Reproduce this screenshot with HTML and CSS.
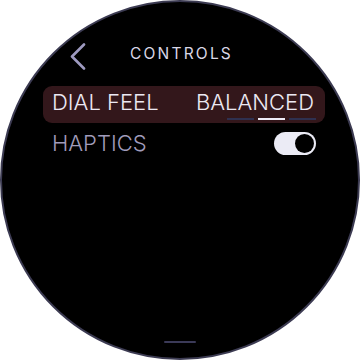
FILE: index.html
```html
<!DOCTYPE html>
<html lang="en">
<head>
  <meta charset="UTF-8">
  <meta name="viewport" content="width=device-width, initial-scale=1.0">
  <title>Controls</title>
  <link rel="stylesheet" href="styles.css">
</head>
<body>

  <div class="watch">

    <!-- Header with back button -->
    <div class="header">
      <svg class="back" width="16" height="27" viewBox="0 0 16 27">
        <polyline points="14,1.5 2,13.5 14,25.5" fill="none" stroke="#9e9ac0" stroke-width="2.6" stroke-linecap="round" stroke-linejoin="round"/>
      </svg>
      <span class="title">CONTROLS</span>
    </div>

    <!-- Settings list -->
    <div class="list">
      <div class="row selected">
        <span class="label">DIAL FEEL</span>
        <div class="value">
          <span class="value-text">BALANCED</span>
          <div class="steps">
            <span class="step"></span>
            <span class="step active"></span>
            <span class="step"></span>
          </div>
        </div>
      </div>

      <div class="row toggle-row">
        <span class="label muted">HAPTICS</span>
        <span class="toggle"><span class="knob"></span></span>
      </div>
    </div>

    <div class="handle"></div>
  </div>

</body>
</html>
```

FILE: styles.css
```css
body {
  margin: 0;
  padding: 0;
  background-color: #fff;
  font-family: Inter, "Noto Sans", sans-serif;
}

/* Round watch face */
.watch {
  width: 360px;
  height: 360px;
  box-sizing: border-box;
  border-radius: 50%;
  border: 2px solid #3c3b52;
  background-color: #000;
  display: flex;
  flex-direction: column;
  padding-top: 41px;
}

.header {
  display: flex;
  align-items: flex-start;
  padding-left: 68px;
  gap: 44px;
}

.back {
  display: block;
}

.title {
  margin-top: 1px;
  font-size: 15.5px;
  line-height: 20px;
  letter-spacing: 2.2px;
  color: #d9d7e6;
}

.list {
  margin: 16px 33px 0 41px;
  display: flex;
  flex-direction: column;
  gap: 7px;
}

.row {
  display: flex;
  justify-content: space-between;
  padding: 0 9px;
  border-radius: 9px;
  font-size: 22px;
  font-weight: 300;
  line-height: 26px;
  color: #ece9f3;
}

.row.selected {
  align-items: flex-start;
  padding-top: 3px;
  padding-bottom: 3px;
  background-color: #33171b;
}

.value {
  display: flex;
  flex-direction: column;
  align-items: flex-end;
}

.value-text {
  margin-right: 2px;
}

.steps {
  display: flex;
  gap: 4px;
  margin-top: 3px;
}

.step {
  width: 27px;
  height: 2px;
  background-color: #2f3050;
}

.step.active {
  background-color: #eeebf6;
}

.toggle-row {
  align-items: center;
}

.muted {
  color: #a09cbb;
}

.toggle {
  width: 42px;
  height: 23px;
  border-radius: 12px;
  background-color: #ebebf5;
  display: flex;
  align-items: center;
  justify-content: flex-end;
  padding-right: 2px;
  box-sizing: border-box;
}

.knob {
  width: 19px;
  height: 19px;
  border-radius: 50%;
  background-color: #000;
}

.handle {
  margin: auto auto 15px;
  width: 32px;
  height: 2px;
  border-radius: 1px;
  background-color: #3b3a58;
}
```
